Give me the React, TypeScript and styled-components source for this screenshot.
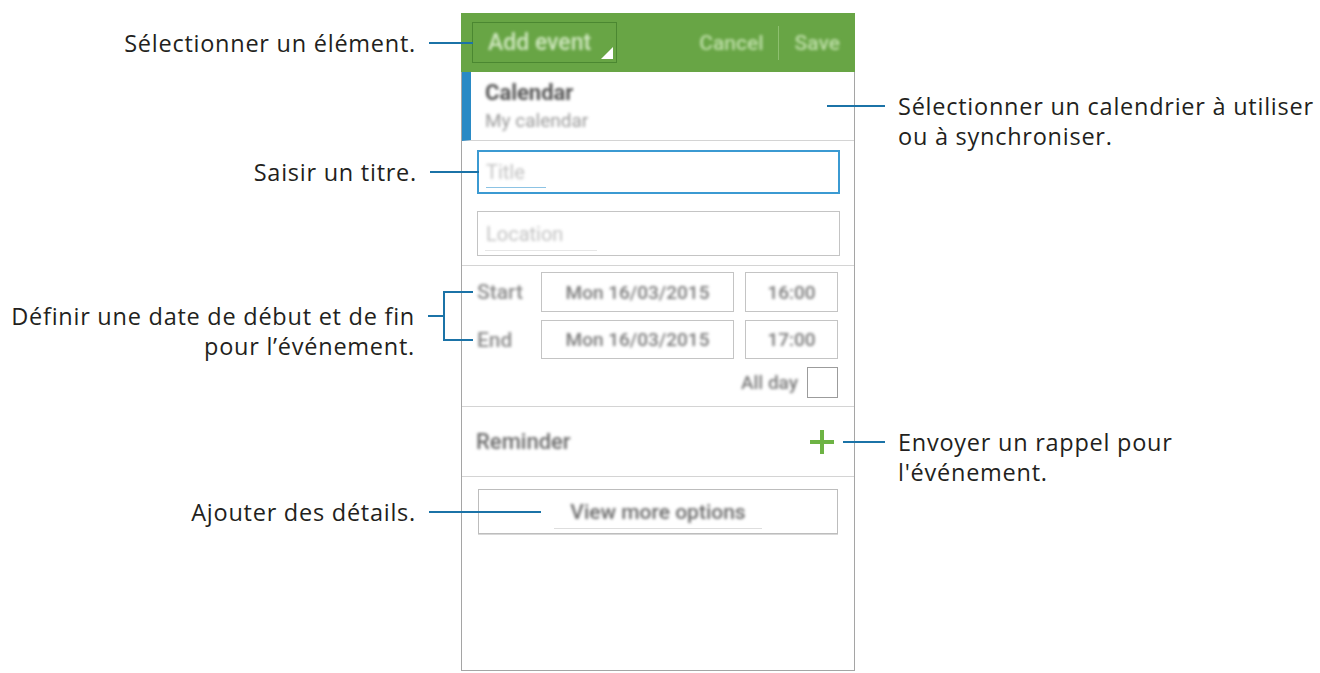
import React from 'react'
import styled, { createGlobalStyle } from 'styled-components'

const GlobalStyle = createGlobalStyle`
  html, body {
    margin: 0;
    padding: 0;
    background: #fff;
  }
  body {
    font-family: "Open Sans", "Liberation Sans", sans-serif;
  }
`

const Stage = styled.div`
  width: 1320px;
  height: 673px;
  box-sizing: border-box;
  padding: 13px 0 0 461px;
  overflow: hidden;
  display: flex;
  align-items: flex-start;
`

const Phone = styled.div`
  width: 394px;
  height: 658px;
  box-sizing: border-box;
  border: 1px solid #a5a5a5;
  border-top: none;
  display: flex;
  flex-direction: column;
  background: #fff;
`

const Blur = styled.span<{ $size: number; $color: string; $weight?: number }>`
  font-family: Roboto, "Liberation Sans", sans-serif;
  font-size: ${({ $size }) => $size}px;
  font-weight: ${({ $weight }) => $weight || 400};
  color: ${({ $color }) => $color};
  filter: blur(1.4px);
  white-space: nowrap;
`

/* header */
const Header = styled.header`
  height: 59px;
  margin: 0 -1px;
  padding: 0 15px 0 11px;
  background: #68a545;
  display: flex;
  align-items: center;
`

const ModeSelect = styled.div`
  position: relative;
  width: 145px;
  height: 41px;
  box-sizing: border-box;
  border: 1px solid #4b8731;
  display: flex;
  align-items: center;
  padding-left: 15px;
`

const Corner = styled.span`
  position: absolute;
  right: 3px;
  bottom: 3px;
  width: 0;
  height: 0;
  border-left: 12px solid transparent;
  border-bottom: 12px solid #fff;
`

const Actions = styled.div`
  margin-left: auto;
  display: flex;
  align-items: center;
`

const ActionDivider = styled.span`
  width: 1px;
  height: 34px;
  margin: 0 16px 0 14px;
  background: #8dbf6e;
`

/* body rows */
const CalendarRow = styled.div`
  position: relative;
  height: 69px;
  box-sizing: border-box;
  border-left: 9px solid #2a8ac5;
  border-bottom: 1px solid #d4d4d4;
  padding: 8px 0 0 14px;
  display: flex;
  flex-direction: column;
  gap: 4px;
  flex: none;
`

const FieldsSection = styled.div`
  padding: 9px 14px 9px 15px;
  display: flex;
  flex-direction: column;
  gap: 17px;
  border-bottom: 1px solid #d4d4d4;
`

const InputBox = styled.div<{ $focused?: boolean; $h: number }>`
  position: relative;
  height: ${({ $h }) => $h}px;
  box-sizing: border-box;
  border: ${({ $focused }) => ($focused ? '2px solid #3b9ad2' : '1px solid #c4c4c4')};
  padding-left: ${({ $focused }) => ($focused ? 7 : 8)}px;
  display: flex;
  align-items: center;
`

const Underline = styled.span<{ $w: number; $color: string }>`
  position: absolute;
  left: ${({ $w }) => ($w > 150 ? 'calc(50% - ' + $w / 2 + 'px)' : '7px')};
  bottom: 4px;
  width: ${({ $w }) => $w}px;
  height: 1px;
  background: ${({ $color }) => $color};
`

const DateSection = styled.div`
  padding: 6px 16px 8px 15px;
  display: flex;
  flex-direction: column;
  gap: 8px;
  border-bottom: 1px solid #d4d4d4;
`

const DateRows = styled.div`
  position: relative;
  display: grid;
  grid-template-columns: 53px 193px 93px;
  grid-template-rows: 40px 39px;
  column-gap: 11px;
  row-gap: 8px;
`

const RowLabel = styled.div`
  display: flex;
  align-items: center;
`

const ValueBox = styled.div`
  box-sizing: border-box;
  border: 1px solid #c4c4c4;
  display: flex;
  align-items: center;
  justify-content: center;
`

const AllDayRow = styled.div`
  display: flex;
  justify-content: flex-end;
  align-items: center;
  gap: 9px;
`

const CheckBox = styled.span`
  width: 31px;
  height: 31px;
  box-sizing: border-box;
  border: 1px solid #9c9c9c;
`

const ReminderRow = styled.div`
  position: relative;
  height: 70px;
  box-sizing: border-box;
  padding: 0 20px 0 14px;
  display: flex;
  align-items: center;
  justify-content: space-between;
  border-bottom: 1px solid #d4d4d4;
`

const MoreSection = styled.div`
  padding: 12px 16px 0 16px;
`

const MoreButton = styled.div`
  position: relative;
  height: 45px;
  box-sizing: border-box;
  border: 1px solid #bdbdbd;
  box-shadow: 0 1px 0 #d8d8d8;
  display: flex;
  align-items: center;
  justify-content: center;
`

/* callouts */
const LeftCallout = styled.div<{ $inset: number }>`
  position: absolute;
  top: 50%;
  right: calc(100% - ${({ $inset }) => $inset}px);
  transform: translateY(-50%);
  display: flex;
  align-items: center;
`

const RightCallout = styled.div<{ $inset: number }>`
  position: absolute;
  top: 50%;
  left: calc(100% - ${({ $inset }) => $inset}px);
  transform: translateY(-50%);
  display: flex;
  align-items: center;
`

const Note = styled.div<{ $align: 'left' | 'right' }>`
  height: 30px;
  font-family: "Open Sans", "Liberation Sans", sans-serif;
  font-size: 23.5px;
  line-height: 30px;
  letter-spacing: 0.75px;
  color: #231f20;
  white-space: nowrap;
  text-align: ${({ $align }) => $align};
  margin: ${({ $align }) => ($align === 'right' ? '0 13px 0 0' : '0 0 0 13px')};
`

const Lead = styled.span<{ $len: number }>`
  width: ${({ $len }) => $len}px;
  height: 2px;
  background: #1b73a7;
  flex: none;
`

const Bracket = styled.span`
  width: 28px;
  height: 46px;
  border: 2px solid #1b73a7;
  border-right: none;
  flex: none;
`

const PlusIcon = () => (
  <svg width="24" height="24" viewBox="0 0 24 24">
    <rect x="10" y="0" width="4" height="24" fill="#6db344" />
    <rect x="0" y="10" width="24" height="4" fill="#6db344" />
  </svg>
)

const dates = [
  { label: 'Start', day: 'Mon 16/03/2015', time: '16:00' },
  { label: 'End', day: 'Mon 16/03/2015', time: '17:00' },
]

export default function App() {
  return (
    <>
      <GlobalStyle />
      <Stage>
        <Phone>
          <Header>
            <ModeSelect>
              <Blur $size={23} $color="#d2e9c2" $weight={500}>Add event</Blur>
              <Corner />
              <LeftCallout $inset={0}>
                <Note $align="right">Sélectionner un élément.</Note>
                <Lead $len={44} />
              </LeftCallout>
            </ModeSelect>
            <Actions>
              <Blur $size={21} $color="#bfdfa9" $weight={500}>Cancel</Blur>
              <ActionDivider />
              <Blur $size={21} $color="#bfdfa9" $weight={500}>Save</Blur>
            </Actions>
          </Header>

          <CalendarRow>
            <Blur $size={22} $color="#555" $weight={700}>Calendar</Blur>
            <Blur $size={19} $color="#9a9a9a">My calendar</Blur>
            <RightCallout $inset={27}>
              <Lead $len={58} />
              <Note $align="left">
                Sélectionner un calendrier à utiliser
                <br />
                ou à synchroniser.
              </Note>
            </RightCallout>
          </CalendarRow>

          <FieldsSection>
            <InputBox $focused $h={44}>
              <Blur $size={20} $color="#c2c2c2">Title</Blur>
              <Underline $w={60} $color="#8cc3e4" />
              <LeftCallout $inset={0}>
                <Note $align="right">Saisir un titre.</Note>
                <Lead $len={49} />
              </LeftCallout>
            </InputBox>
            <InputBox $h={45}>
              <Blur $size={20} $color="#c2c2c2">Location</Blur>
              <Underline $w={112} $color="#e6e6e6" />
            </InputBox>
          </FieldsSection>

          <DateSection>
            <DateRows>
              {dates.map((d) => (
                <React.Fragment key={d.label}>
                  <RowLabel>
                    <Blur $size={21} $color="#8a8a8a" $weight={500}>{d.label}</Blur>
                  </RowLabel>
                  <ValueBox>
                    <Blur $size={19} $color="#7a7a7a" $weight={500}>{d.day}</Blur>
                  </ValueBox>
                  <ValueBox>
                    <Blur $size={19} $color="#7a7a7a" $weight={500}>{d.time}</Blur>
                  </ValueBox>
                </React.Fragment>
              ))}
              <LeftCallout $inset={-4}>
                <Note $align="right">
                  Définir une date de début et de fin
                  <br />
                  pour l’événement.
                </Note>
                <Lead $len={15} />
                <Bracket />
              </LeftCallout>
            </DateRows>
            <AllDayRow>
              <Blur $size={19} $color="#7a7a7a" $weight={500}>All day</Blur>
              <CheckBox />
            </AllDayRow>
          </DateSection>

          <ReminderRow>
            <Blur $size={22} $color="#6a6a6a" $weight={500}>Reminder</Blur>
            <PlusIcon />
            <RightCallout $inset={11}>
              <Lead $len={42} />
              <Note $align="left">
                Envoyer un rappel pour
                <br />
                l'événement.
              </Note>
            </RightCallout>
          </ReminderRow>

          <MoreSection>
            <MoreButton>
              <Blur $size={21} $color="#6a6a6a" $weight={500}>View more options</Blur>
              <Underline $w={208} $color="#dedede" />
              <LeftCallout $inset={62}>
                <Note $align="right">Ajouter des détails.</Note>
                <Lead $len={112} />
              </LeftCallout>
            </MoreButton>
          </MoreSection>
        </Phone>
      </Stage>
    </>
  )
}
